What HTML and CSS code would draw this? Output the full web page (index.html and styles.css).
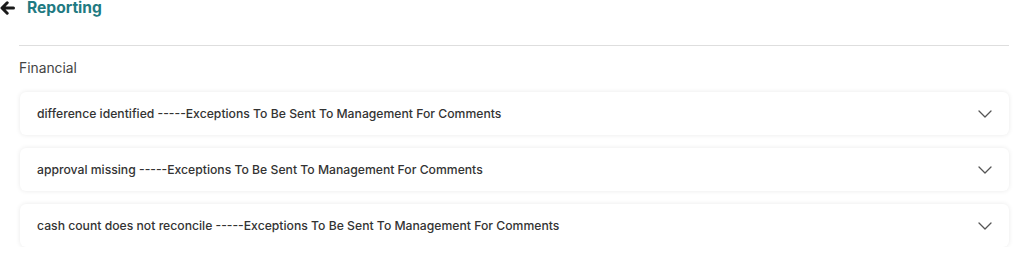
FILE: index.html
```html
<!DOCTYPE html>
<html lang="en">
<head>
    <meta charset="UTF-8">
    <meta name="viewport" content="width=device-width, initial-scale=1.0">
    <title>Reporting</title>
    <link rel="stylesheet" href="styles.css">
</head>
<body>
    <div class="page-header">
        <span class="back-arrow">
            <svg width="15" height="14" viewBox="0 0 15 14">
                <path d="M7.2 1.8 L2 7 L7.2 12.2 M2.4 7 H13.5" fill="none" stroke="#1a1a1a" stroke-width="3" stroke-linecap="round" stroke-linejoin="round"/>
            </svg>
        </span>
        <h1 class="page-title">Reporting</h1>
    </div>

    <div class="container">
        <hr class="divider">
        <div class="section-title">Financial</div>

        <div class="accordion">
            <div class="accordion-item">
                <span class="item-text">difference identified -----Exceptions To Be Sent To Management For Comments</span>
                <svg class="chevron" width="14" height="8" viewBox="0 0 14 8">
                    <path d="M1 1 L7 7 L13 1" fill="none" stroke="#555" stroke-width="1.3" stroke-linecap="round" stroke-linejoin="round"/>
                </svg>
            </div>
            <div class="accordion-item">
                <span class="item-text">approval missing -----Exceptions To Be Sent To Management For Comments</span>
                <svg class="chevron" width="14" height="8" viewBox="0 0 14 8">
                    <path d="M1 1 L7 7 L13 1" fill="none" stroke="#555" stroke-width="1.3" stroke-linecap="round" stroke-linejoin="round"/>
                </svg>
            </div>
            <div class="accordion-item">
                <span class="item-text">cash count does not reconcile -----Exceptions To Be Sent To Management For Comments</span>
                <svg class="chevron" width="14" height="8" viewBox="0 0 14 8">
                    <path d="M1 1 L7 7 L13 1" fill="none" stroke="#555" stroke-width="1.3" stroke-linecap="round" stroke-linejoin="round"/>
                </svg>
            </div>
        </div>
    </div>
</body>
</html>
```

FILE: styles.css
```css
body {
    margin: 0;
    font-family: Inter, "Open Sans", "Liberation Sans", sans-serif;
    background-color: #fff;
    color: #333;
}

.page-header {
    display: flex;
    align-items: center;
    gap: 12px;
    height: 16px;
}

.back-arrow {
    display: flex;
    align-items: center;
}

.page-title {
    margin: 0;
    font-size: 15.6px;
    font-weight: 700;
    color: #1f7a82;
    line-height: 16px;
}

.container {
    padding: 0 15px 0 19px;
}

.divider {
    border: none;
    border-top: 1px solid #dedede;
    margin: 29px 0 0 0;
}

.section-title {
    font-size: 13.8px;
    color: #444;
    margin: 12px 0 14px 0;
    line-height: 20px;
}

.accordion {
    display: flex;
    flex-direction: column;
    gap: 13px;
}

.accordion-item {
    display: flex;
    justify-content: space-between;
    align-items: center;
    height: 43px;
    padding: 0 17px;
    margin-left: 1px;
    background-color: #fff;
    border-radius: 6px;
    box-shadow: 0 0 5px rgba(0, 0, 0, 0.09);
    box-sizing: border-box;
}

.item-text {
    font-size: 12.2px;
    font-weight: 500;
    color: #333;
}

.chevron {
    display: block;
}
```
